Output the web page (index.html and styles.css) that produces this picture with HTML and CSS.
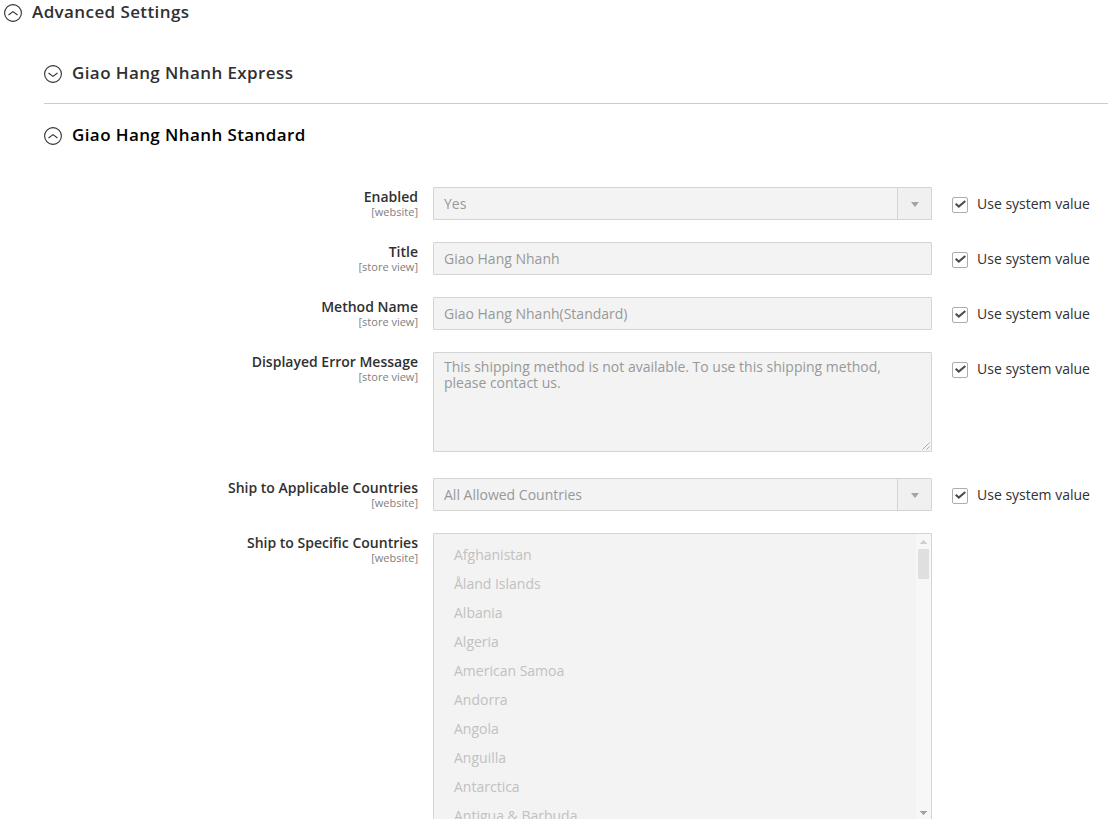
FILE: index.html
```html
<!DOCTYPE html>
<html lang="en">
<head>
<meta charset="utf-8">
<title>Advanced Settings</title>
<link rel="stylesheet" href="styles.css">
</head>
<body>
<svg class="defs" width="0" height="0" aria-hidden="true">
  <symbol id="up" viewBox="0 0 18 18"><circle cx="9" cy="9" r="8.4"/><path d="M4.500 11 9 7.600l4.500 3.400"/></symbol>
  <symbol id="down" viewBox="0 0 18 18"><circle cx="9" cy="9" r="8.400"/><path d="M4.500 8 9 11.400l4.500-3.400"/></symbol>
  <symbol id="check" viewBox="1 1 14 14"><path d="M3.700 6.700 6.800 9.600 13.300 4"/></symbol>
</svg>
<main class="page">
  <h2 class="heading heading-main"><svg class="toggle"><use href="#up"/></svg>Advanced Settings</h2>
  <section class="group">
    <h3 class="heading heading-closed"><svg class="toggle"><use href="#down"/></svg>Giao Hang Nhanh Express</h3>
    <h3 class="heading heading-open"><svg class="toggle"><use href="#up"/></svg>Giao Hang Nhanh Standard</h3>
  </section>
  <div class="fields">
    <div class="row">
      <div class="label">Enabled<span class="scope">[website]</span></div>
      <div class="control select"><span class="value">Yes</span><span class="arrow"></span></div>
      <div class="inherit"><svg class="box"><use href="#check"/></svg>Use system value</div>
    </div>
    <div class="row">
      <div class="label">Title<span class="scope">[store view]</span></div>
      <div class="control"><span class="value">Giao Hang Nhanh</span></div>
      <div class="inherit"><svg class="box"><use href="#check"/></svg>Use system value</div>
    </div>
    <div class="row">
      <div class="label">Method Name<span class="scope">[store view]</span></div>
      <div class="control"><span class="value">Giao Hang Nhanh(Standard)</span></div>
      <div class="inherit"><svg class="box"><use href="#check"/></svg>Use system value</div>
    </div>
    <div class="row row-area">
      <div class="label">Displayed Error Message<span class="scope">[store view]</span></div>
      <div class="control area"><span class="message">This shipping method is not available. To use this shipping method, please contact us.</span><svg class="grip" viewBox="0 0 8 8"><path d="M.5 7.500l7-7M4.500 7.500l3-3"/></svg></div>
      <div class="inherit"><svg class="box"><use href="#check"/></svg>Use system value</div>
    </div>
    <div class="row">
      <div class="label">Ship to Applicable Countries<span class="scope">[website]</span></div>
      <div class="control select"><span class="value">All Allowed Countries</span><span class="arrow"></span></div>
      <div class="inherit"><svg class="box"><use href="#check"/></svg>Use system value</div>
    </div>
    <div class="row">
      <div class="label">Ship to Specific Countries<span class="scope">[website]</span></div>
      <div class="control list">
        <ul class="options">
          <li>Afghanistan</li><li>Åland Islands</li><li>Albania</li><li>Algeria</li><li>American Samoa</li><li>Andorra</li><li>Angola</li><li>Anguilla</li><li>Antarctica</li><li>Antigua &amp; Barbuda</li>
        </ul>
        <div class="scrollbar">
          <svg class="tip tip-up" viewBox="0 0 7 4"><path d="M0 4V3h1V2h1V1h1V0h1v1h1v1h1v1h1v1z"/></svg>
          <span class="thumb"></span>
          <svg class="tip tip-down" viewBox="0 0 7 4"><path d="M0 0v1h1v1h1v1h1v1h1V3h1V2h1V1h1V0z"/></svg>
        </div>
      </div>
    </div>
  </div>
</main>
</body>
</html>
```
FILE: styles.css
```css
* { box-sizing: border-box; }
body { margin: 0; background: #fff; color: #303030; font: 14px/19px "Open Sans", sans-serif; }
.defs { position: absolute; }
.page { height: 819px; overflow: hidden; }
.heading { display: flex; align-items: flex-start; gap: 10px; margin: 0; font-size: 17px; line-height: 24px; font-weight: 600; letter-spacing: .4px; }
.toggle { flex: none; width: 18px; height: 18px; margin-top: 4px; fill: none; stroke: #303030; stroke-width: 1.1; }
.heading-main { height: 61px; padding-left: 4px; }
.group { padding-left: 44px; }
.heading-closed { height: 43px; border-bottom: 1px solid #ccc; }
.heading-open { height: 83px; padding-top: 19px; color: #000; }
.row { display: grid; grid-template-columns: 418px 15px 499px 1fr; height: 55px; }
.row-area { height: 126px; }
.label { grid-column: 1; text-align: right; font-weight: 600; }
.scope { display: block; font-size: 11px; line-height: 12px; font-weight: 400; color: #808080; }
.control { grid-column: 3; display: flex; height: 33px; border: 1px solid #d4d4d4; border-radius: 1px; background: #f3f3f3; color: #989898; }
.value { flex: 1; padding: 6px 10px; }
.arrow { display: flex; align-items: center; justify-content: center; width: 34px; border-left: 1px solid #d4d4d4; background: #f0f0f0; }
.arrow::before { content: ""; margin-top: 1px; border: 4px solid transparent; border-top: 5px solid #a8a3a0; border-bottom: 0; }
.inherit { grid-column: 4; display: flex; gap: 9px; padding: 7px 0 0 20px; white-space: nowrap; }
.box { flex: none; width: 16px; height: 16px; margin-top: 3px; border: 1px solid #adadad; border-radius: 2px; fill: none; stroke: #514943; stroke-width: 2; }
.area { height: 100px; padding: 6px 0 0 10px; line-height: 16px; }
.message { flex: 1; }
.grip { align-self: flex-end; width: 8px; height: 8px; margin: 0 1px 1px 0; fill: none; stroke: #999; stroke-width: .8; }
.list { height: 320px; padding-top: 7px; }
.options { flex: 1; margin: 0; padding: 0 0 0 20px; list-style: none; color: #c1c1c1; }
.options li { height: 29px; line-height: 28px; }
.scrollbar { display: flex; flex-direction: column; align-items: center; width: 15px; height: 286px; margin-top: -7px; background: #f7f7f7; }
.tip { flex: none; width: 7px; height: 4px; }
.tip-up { margin-top: 6px; fill: #d0d0d0; }
.thumb { width: 11px; height: 30px; margin-top: 5px; background: #dfdfdf; }
.tip-down { margin-top: auto; margin-bottom: 5px; fill: #a3a3a3; }
```
